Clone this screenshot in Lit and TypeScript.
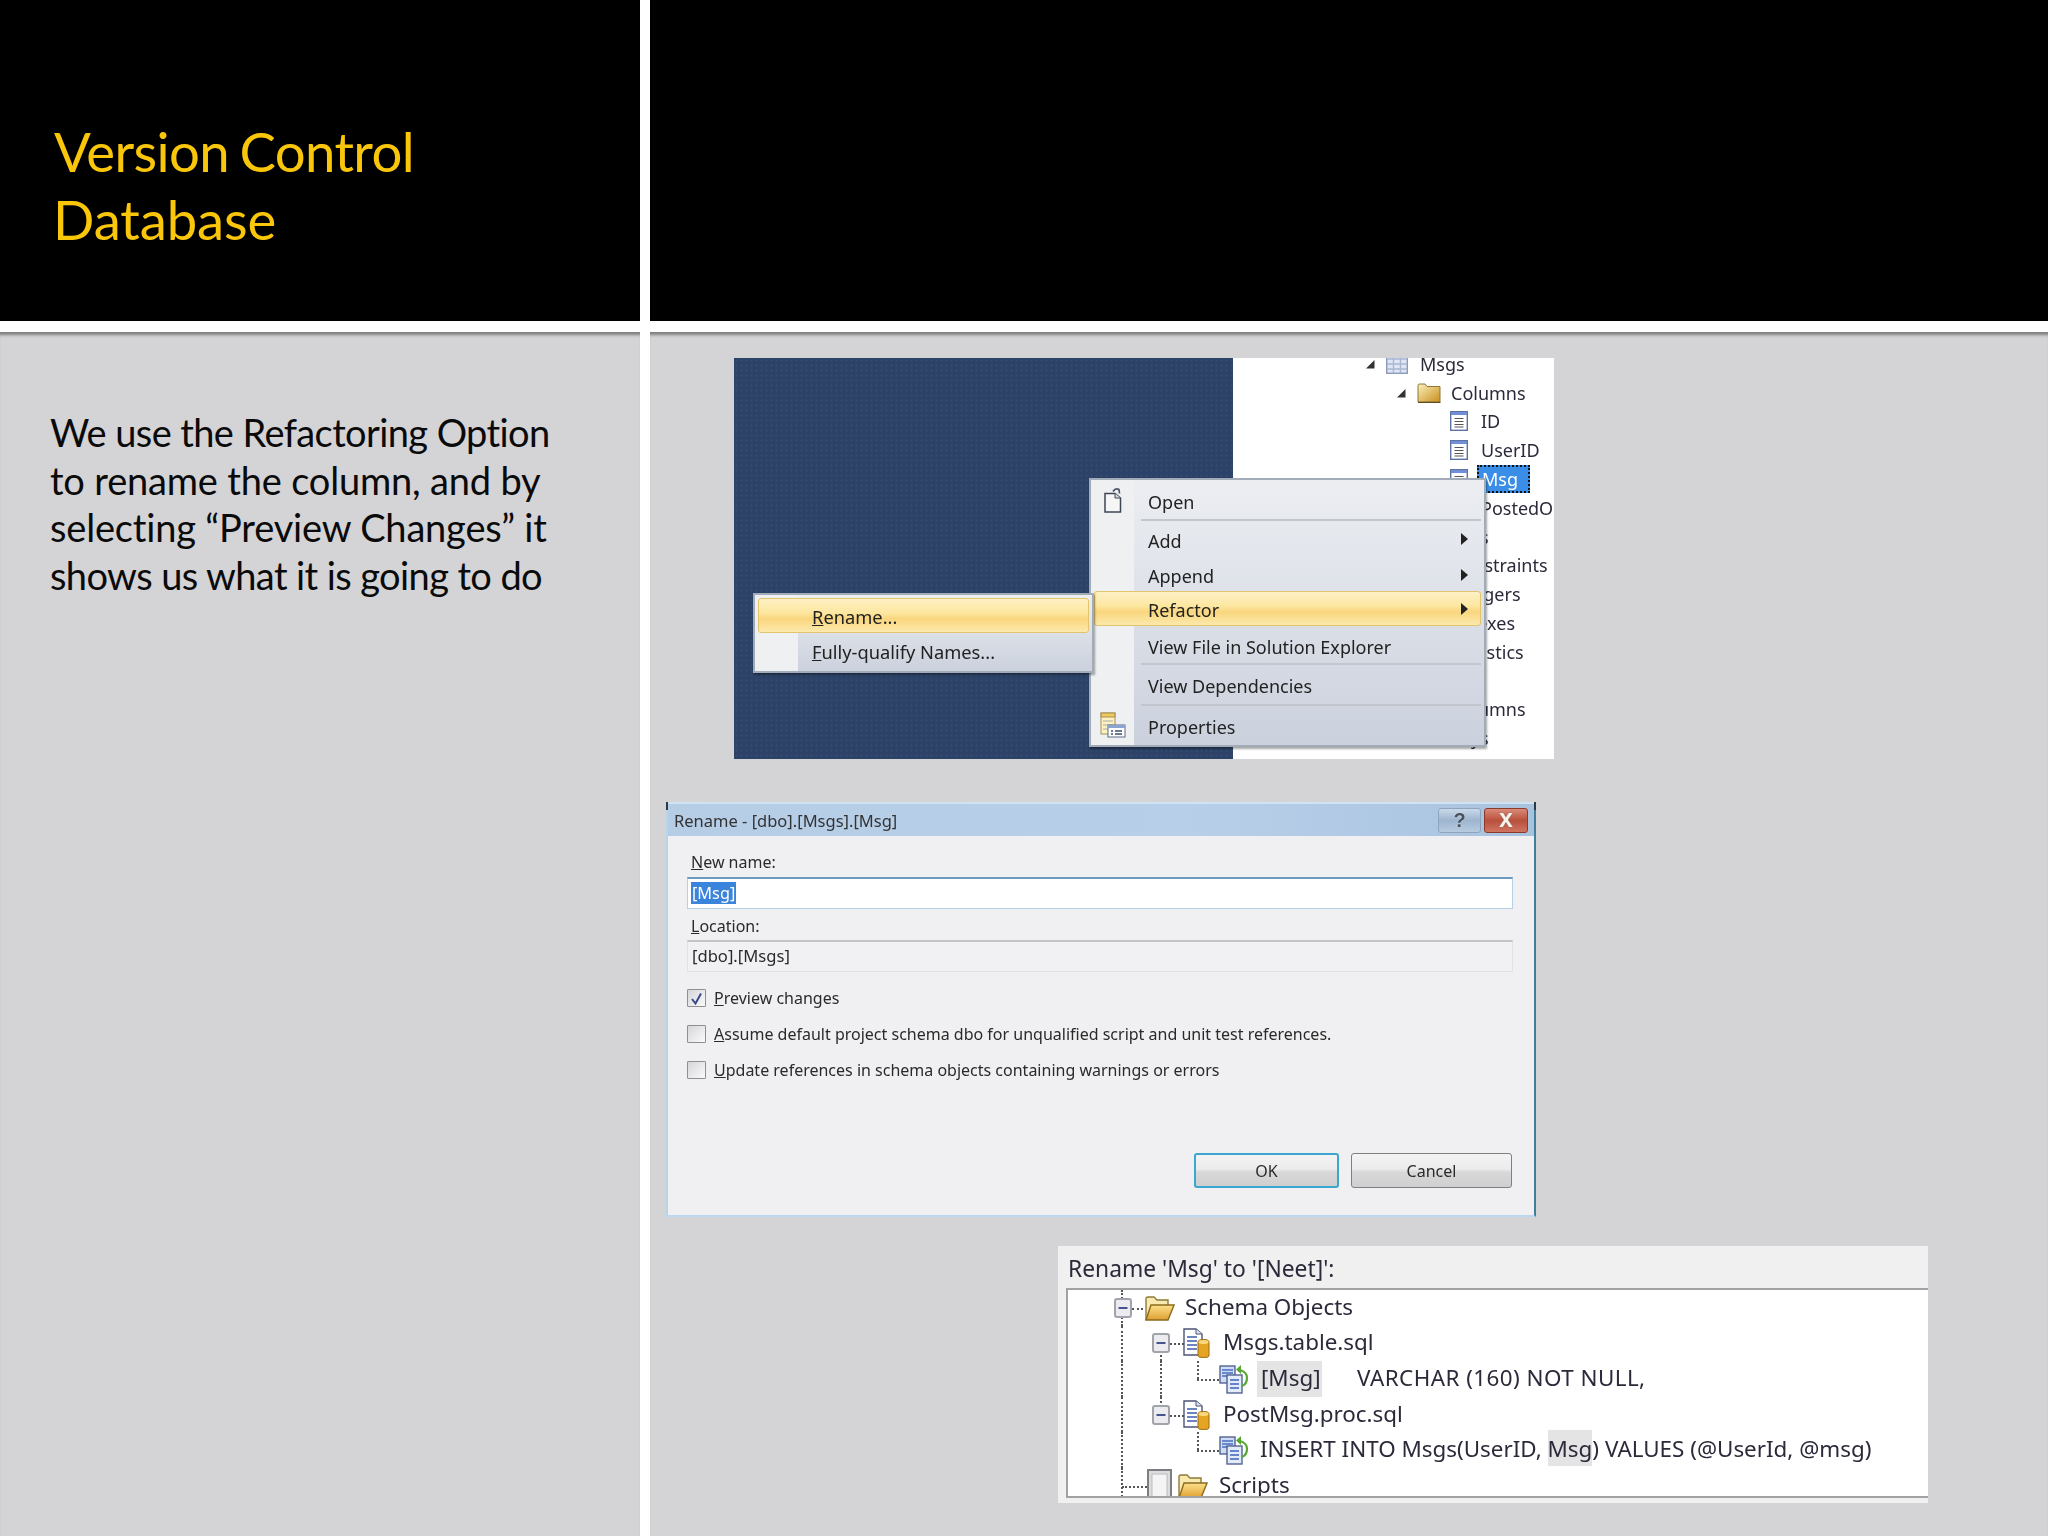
import { LitElement, html, css } from "lit";
import { customElement } from "lit/decorators.js";

const arrowDown = html`<svg class="ti" width="10" height="10" viewBox="0 0 10 10"><path d="M9.5 1V9.5H1Z" fill="#333"/></svg>`;
const tableIcon = html`<svg width="22" height="20" viewBox="0 0 22 20"><rect x=".7" y=".7" width="20.6" height="18.6" fill="#dfe6f4" stroke="#8b9ab8" stroke-width="1.4"/><path d="M1 5H21M1 10H21M1 15H21M7.500 1V19M14.500 1V19" stroke="#a9b6d4" stroke-width="1.400"/></svg>`;
const folderIcon = html`<svg width="24" height="20" viewBox="0 0 24 20"><defs><linearGradient id="fg" x1="0" y1="0" x2="1" y2="1"><stop offset="0" stop-color="#fbf0bd"/><stop offset="1" stop-color="#c98f1c"/></linearGradient></defs><path d="M1 2.500Q1 1 2.500 1H8L10 3.500H23V19H1Z" fill="url(#fg)" stroke="#8e7636" stroke-width="1"/><path d="M1 19.500H23.500" stroke="#5e4a1e" stroke-width="1.200"/></svg>`;
const columnIcon = html`<svg width="18" height="20" viewBox="0 0 18 20"><rect x=".7" y=".7" width="16.600" height="18.600" fill="#fff" stroke="#5d72a0" stroke-width="1.400"/><rect x="1" y="1" width="16" height="3" fill="#6f8fd6"/><path d="M4.500 7.500H13.500M4.500 10.500H13.500M4.500 13.500H13.500M4.500 16H13.500" stroke="#555" stroke-width="1.200"/></svg>`;
const openIcon = html`<svg width="18" height="26" viewBox="0 0 18 26"><path d="M1 6.500H11L16.500 11V25H1Z" fill="#f6f6f6" stroke="#3e4654" stroke-width="1.500"/><path d="M11 6.500V11H16.500" fill="#d8dbe2" stroke="#3e4654"/><path d="M9 4.500Q11.500 .5 15 2.500L15.500 6.500" fill="none" stroke="#4c5565" stroke-width="1.700"/></svg>`;
const propsIcon = html`<svg width="26" height="26" viewBox="0 0 26 26"><rect x="1" y="1" width="14" height="21" fill="#fdf1c0" stroke="#a2905b"/><rect x="1" y="1" width="14" height="4" fill="#f0c95c" stroke="#a2905b"/><path d="M3 9H13M3 13H13M3 17H9" stroke="#aaa"/><rect x="8" y="13" width="17" height="12" fill="#fff" stroke="#5d6a84"/><rect x="8" y="13" width="17" height="3" fill="#8aa3cf"/><path d="M11 19H13M15 19H22M11 22H13M15 22H22" stroke="#3c4e74" stroke-width="1.300"/></svg>`;
const expander = html`<svg width="18" height="20" viewBox="0 0 18 20"><rect x="1" y="1" width="16" height="18" rx="2" fill="#ececf0" stroke="#a2a4ac" stroke-width="2"/><path d="M4.500 10H13.500" stroke="#46558f" stroke-width="2"/></svg>`;
const openFolder = html`<svg width="32" height="26" viewBox="0 0 32 26"><defs><linearGradient id="of" x1="0" y1="0" x2="0" y2="1"><stop offset="0" stop-color="#fbe18c"/><stop offset="1" stop-color="#e0a030"/></linearGradient></defs><path d="M3 25V4Q3 2 5 2H11L14 5H25V10" fill="#f8e9ae" stroke="#8f7a3a" stroke-width="1.400"/><path d="M3 25L8 10H31L25 25Z" fill="url(#of)" stroke="#8c6a1c" stroke-width="1.400"/></svg>`;
const docDb = html`<svg width="27" height="30" viewBox="0 0 27 30"><path d="M1 1H13L19 6V27H1Z" fill="#fff" stroke="#4a5576" stroke-width="1.400"/><path d="M13 1V6H19" fill="#dfe3ec" stroke="#4a5576"/><path d="M4 9H14M4 13H14M4 17H14M4 21H14" stroke="#3e5ea8" stroke-width="1.600"/><path d="M15 14Q15 11.500 20.500 11.500T26 14V28Q26 29.500 20.500 29.500T15 28Z" fill="#e5a423" stroke="#9a6c12"/><ellipse cx="20.500" cy="14" rx="5" ry="2" fill="#f8d878"/></svg>`;
const renameIcon = html`<svg width="30" height="30" viewBox="0 0 30 30"><rect x="1" y="2" width="15" height="17" fill="#cfdcf6" stroke="#49598a" stroke-width="1.300"/><path d="M3 6H14M3 9H14M3 12H14" stroke="#4a6ec0" stroke-width="1.500"/><rect x="8" y="11" width="15" height="18" fill="#e3ebfb" stroke="#49598a" stroke-width="1.300"/><path d="M11 16H20M11 20H20M11 24H20" stroke="#3c63bb" stroke-width="1.700"/><path d="M21 6Q28 8 28 14T23 22" fill="none" stroke="#56a832" stroke-width="2.200"/><path d="M22 1V10L17 5.500Z" fill="#56a832"/></svg>`;
const smallCheck = html`<svg width="25" height="33" viewBox="0 0 25 33"><rect x="1" y="1" width="23" height="31" fill="#dcdcde" stroke="#7e7e82" stroke-width="2"/><rect x="5" y="5" width="15" height="23" fill="#f4f4f4" stroke="#bcbcc0"/></svg>`;
const submenuArrow = html`<svg class="sa" width="7" height="12" viewBox="0 0 7 12"><path d="M0 0L7 6L0 12Z" fill="#222"/></svg>`;

interface TreeRow { x: number; gap: number; arrow?: boolean; icon?: unknown; text: string; sel?: boolean }
const explorer: TreeRow[] = [
  { x: 132, gap: 12, arrow: true, icon: tableIcon, text: "Msgs" },
  { x: 163, gap: 10, arrow: true, icon: folderIcon, text: "Columns" },
  { x: 217, gap: 13, icon: columnIcon, text: "ID" },
  { x: 217, gap: 13, icon: columnIcon, text: "UserID" },
  { x: 217, gap: 9, icon: columnIcon, text: "Msg", sel: true },
  { x: 217, gap: 13, icon: columnIcon, text: "PostedOn" },
  { x: 217, gap: 0, text: "Keys" },
  { x: 218, gap: 0, text: "Constraints" },
  { x: 218, gap: 0, text: "Triggers" },
  { x: 216, gap: 0, text: "Indexes" },
  { x: 216, gap: 0, text: "Statistics" },
  { x: 218, gap: 0, text: "" },
  { x: 218, gap: 0, text: "Columns" },
  { x: 217, gap: 0, text: "Keys" },
];

interface MenuItem { h: number; label?: string; icon?: unknown; sub?: boolean; hot?: boolean; sep?: boolean }
const mainMenu: MenuItem[] = [
  { h: 38, label: "Open", icon: openIcon },
  { h: 2, sep: true },
  { h: 36, label: "Add", sub: true },
  { h: 35, label: "Append", sub: true },
  { h: 35, label: "Refactor", sub: true, hot: true },
  { h: 36, label: "View File in Solution Explorer" },
  { h: 2, sep: true },
  { h: 39, label: "View Dependencies" },
  { h: 2, sep: true },
  { h: 38, label: "Properties", icon: propsIcon },
];

@customElement("app-root")
export class AppRoot extends LitElement {
  static styles = css`
    :host { display: block; width: 2048px; height: 1536px; overflow: hidden; background: #fff; }
    .slide { display: grid; grid-template-columns: 640px 1fr; grid-template-rows: 321px 1fr; gap: 11px 10px; width: 2048px; height: 1536px; }
    .band { background: #000; }
    .title { padding: 118px 0 0 54px; margin: 0; font: 400 54.500px/67.700px "Lato", sans-serif; color: #fac60a; letter-spacing: -.6px; word-spacing: -3px; }
    .db { letter-spacing: -.1px; margin-left: -1px; }
    .pane { background: #d4d3d5; box-shadow: inset 0 5px 3px -2px rgba(60,60,60,.55); position: relative; }
    .left p { margin: 0; padding: 77px 0 0 50px; font: 400 38px/47.700px "Lato", sans-serif; color: #0a0a0a; letter-spacing: -.6px; }
    .left .loose { letter-spacing: -.18px; }
    .right { display: flex; flex-direction: column; align-items: flex-start; overflow: hidden; }

    .shot { font-family: "Noto Sans", sans-serif; color: #222; filter: blur(.35px); }
    /* context-menu capture */
    .ctx { margin: 26px 0 0 84px; width: 820px; height: 401px; display: flex; position: relative; overflow: hidden; background: #fff; }
    .navy { width: 499px; background-color: #2c4266; background-image: radial-gradient(#324a70 1px, transparent 1.200px); background-size: 5px 5px; }
    .explorer { flex: 1; margin-top: -8.500px; font-size: 18px; overflow: hidden; }
    .erow { height: 28.800px; display: flex; align-items: center; white-space: nowrap; color: #2a2a3a; }
    .ti { margin-right: 11px; flex: none; }
    .sel { background: #3a8ee8; color: #fff; outline: 2px dotted #111; outline-offset: -2px; padding: 0 12px 0 5px; height: 28px; line-height: 28px; }
    .menu { position: absolute; background: linear-gradient(#eceef2, #cbd1dd); border: 2px solid #a2abb8; box-sizing: border-box; font-size: 18px; color: #222; box-shadow: 1px 2px 2px rgba(0,0,0,.35); }
    .gutter { position: absolute; left: 0; top: 0; bottom: 0; background: #eef0f2; }
    .main { left: 355px; top: 120px; width: 397px; height: 269px; padding-top: 1px; }
    .main .gutter { width: 43px; }
    .sub { left: 19px; top: 235px; width: 341px; height: 80px; z-index: 2; padding-top: 3px; font-size: 18.300px; }
    .sub .gutter { width: 43px; }
    .item { position: relative; display: flex; align-items: center; box-sizing: border-box; }
    .main .item { padding: 3px 16px 0 57px; }
    .sub .item { padding: 2px 10px 0 57px; height: 35px; }
    .icon { position: absolute; left: 0; top: 0; bottom: 0; width: 43px; display: flex; justify-content: center; align-items: center; }
    .label { flex: 1; white-space: nowrap; }
    .sa { flex: none; margin-top: -3px; }
    .hot { background: linear-gradient(#fdf0c4, #fde7a0 42%, #f9d67e 60%, #fce9ac); border: 1px solid #e3c46c; border-radius: 3px; margin: 0 3px; }
    .main .hot { padding-left: 53px; padding-right: 12px; margin-top: -1px; margin-bottom: 1px; }
    .sub .hot { margin: 0 3px; padding-left: 53px; }
    .sep { margin-left: 50px; margin-right: 3px; background: #c2c6ce; position: relative; }

    /* rename dialog capture */
    .dialog { position: relative; margin: 43px 0 0 16px; width: 870px; height: 415px; box-sizing: border-box; background: #f0f0f2; display: flex; flex-direction: column; font-size: 16px; border-top: 2px solid #cfe3f3; border-left: 2px solid #b6d4ea; border-right: 2px solid #3f7f9c; border-bottom: 2px solid #bcd8ee; color: #2a2a2a; }
    .dialog::before, .dialog::after { content: ""; position: absolute; top: -2px; width: 2px; height: 8px; background: #2a3a48; }
    .dialog::before { left: -2px; }
    .dialog::after { right: -2px; }
    .titlebar { height: 32px; flex: none; display: flex; align-items: center; padding: 0 6px 0 6px; background: linear-gradient(90deg, #b6cde6, #b8cfe9 60%, #a9c3df); font-size: 16.500px; color: #333; }
    .titlebar .t { flex: 1; }
    .cap { height: 25px; border: 1px solid #8ea5bd; border-radius: 3px; display: flex; align-items: center; justify-content: center; font-weight: 700; font-family: "Liberation Sans", sans-serif; box-sizing: border-box; }
    .help { width: 43px; background: linear-gradient(#c9d9ea, #9db5cf 50%, #b7cbe0); color: #46505e; margin-right: 3px; font-size: 20px; text-shadow: 0 0 1px #fff; }
    .close { width: 44px; background: linear-gradient(#d98a78, #b9503c 50%, #cf7561); border-color: #8c3a2c; color: #f8f2ec; font-size: 25px; line-height: 20px; padding-bottom: 5px; text-shadow: 0 0 1px #555; }
    .dbody { flex: 1; display: flex; flex-direction: column; padding: 16px 21px 27px 19px; }
    .flabel { height: 20px; line-height: 20px; padding-left: 4px; }
    .field { height: 32px; box-sizing: border-box; border: 1px solid #b5cfe6; border-top: 2px solid #6d9bc0; background: #fff; display: flex; align-items: center; padding: 0 0 2px 3px; margin-top: 5px; font-size: 16.300px; }
    .field span { background: #3a84dc; color: #fff; padding: 0 1px; }
    .ro { background: #f1f1f3; border: 1px solid #e2e2e6; border-top: 2px solid #c4c4c8; margin-top: 4px; font-size: 16.600px; }
    .ro span { background: none; color: #2a2a2a; }
    .gap7 { margin-top: 7px; }
    .checks { display: flex; flex-direction: column; gap: 18px; margin-top: 17px; }
    .check { display: flex; align-items: center; gap: 8px; height: 18px; white-space: nowrap; }
    .box { display: flex; align-items: center; justify-content: center; width: 19px; height: 18px; box-sizing: border-box; border: 1.500px solid #8f8f92; border-radius: 1px; background: linear-gradient(135deg, #d6d6da, #fafafa); flex: none; }
    .btns { margin-top: auto; display: flex; justify-content: flex-end; gap: 12px; margin-right: 1px; }
    .btn { height: 35px; box-sizing: border-box; border: 1.500px solid #7f7f7f; border-radius: 3px; background: linear-gradient(#f3f3f3, #ececec 45%, #d8d8d8 55%, #cfcfcf); display: flex; align-items: center; justify-content: center; font-size: 16px; }
    .ok { width: 145px; border: 2px solid #3ba6d0; }
    .cancel { width: 161px; }

    /* preview capture */
    .preview { margin: 29px 0 0 408px; width: 870px; height: 257px; background: #f0f0f0; font-size: 22.400px; color: #2a2a3a; display: flex; flex-direction: column; }
    .phead { height: 42px; flex: none; display: flex; align-items: center; padding: 3px 0 0 10px; box-sizing: border-box; font-size: 22.800px; }
    .ptree { margin-left: 8px; height: 210px; box-sizing: border-box; background: #fff; border: 2px solid #a2a2a2; border-right: none; overflow: hidden; }
    .prow { position: relative; height: 35.600px; display: flex; align-items: center; white-space: pre; }
    .prow svg { flex: none; position: relative; z-index: 1; }
    .v { position: absolute; width: 0; border-left: 2px dotted #555; }
    .h { position: absolute; height: 0; top: 50%; border-top: 2px dotted #555; }
    .full { top: 0; bottom: 0; }
    .upper { top: 0; bottom: 50%; }
    .lower { top: 50%; bottom: 0; }
    .ex { display: flex; margin-right: 13px; }
    .ex0 { margin-right: 11px; }
    .txt { margin-bottom: 3px; }
    .mark { background: #e4e4e4; display: flex; align-items: center; box-sizing: border-box; height: 35.600px; width: 65px; padding: 0 0 3px 4px; margin-left: 8px; }
    .imark { background: #e4e4e4; padding: 3px 0 2px; }
    .wide { letter-spacing: .45px; margin-left: 35px; }
    .name { margin-left: 13px; }
    .name0 { margin-left: 10px; }
    .ins { margin-left: 11px; }
    .fld { display: flex; margin-left: 4px; }
    .scr { margin-left: 11px; }
  `;

  private menuItem(m: MenuItem) {
    if (m.sep) return html`<div class="sep" style="height:${m.h}px"></div>`;
    return html`<div class="item ${m.hot ? "hot" : ""}" style="height:${m.h}px">
      ${m.icon ? html`<span class="icon">${m.icon}</span>` : ""}
      <span class="label">${m.label}</span>
      ${m.sub ? submenuArrow : ""}
    </div>`;
  }

  private erow(r: TreeRow) {
    return html`<div class="erow" style="padding-left:${r.x}px">
      ${r.arrow ? arrowDown : ""}
      ${r.icon ? html`<span style="display:flex;margin-right:${r.gap}px">${r.icon}</span>` : ""}
      ${r.sel ? html`<span class="sel">${r.text}</span>` : html`<span>${r.text}</span>`}
    </div>`;
  }

  private line(cls: string, left: number, width?: number) {
    return html`<span class="${cls}" style="left:${left}px${width ? `;width:${width}px` : ""}"></span>`;
  }

  render() {
    return html`<div class="slide">
      <div class="band"><h1 class="title">Version Control<br /><span class="db">Database</span></h1></div>
      <div class="band"></div>
      <div class="pane left"><p>We use the Refactoring Option<br /><span class="loose">to rename the column, and by</span><br /><span class="loose">selecting “Preview Changes” it</span><br />shows us what it is going to do</p></div>
      <div class="pane right">
        <div class="shot ctx">
          <div class="navy"></div>
          <div class="explorer">${explorer.map((r) => this.erow(r))}</div>
          <div class="menu main">
            <div class="gutter"></div>
            ${mainMenu.map((m) => this.menuItem(m))}
          </div>
          <div class="menu sub">
            <div class="gutter"></div>
            <div class="item hot"><span class="label"><u>R</u>ename...</span></div>
            <div class="item"><span class="label"><u>F</u>ully-qualify Names...</span></div>
          </div>
        </div>

        <div class="shot dialog">
          <div class="titlebar">
            <span class="t">Rename - [dbo].[Msgs].[Msg]</span>
            <span class="cap help">?</span>
            <span class="cap close">x</span>
          </div>
          <div class="dbody">
            <div class="flabel"><u>N</u>ew name:</div>
            <div class="field"><span>[Msg]</span></div>
            <div class="flabel gap7"><u>L</u>ocation:</div>
            <div class="field ro"><span>[dbo].[Msgs]</span></div>
            <div class="checks">
              <div class="check"><span class="box"><svg width="13" height="13" viewBox="0 0 13 13"><path d="M2 7L5.500 11.500L11 1.500" fill="none" stroke="#3c4a8c" stroke-width="2"/></svg></span><span><u>P</u>review changes</span></div>
              <div class="check"><span class="box"></span><span><u>A</u>ssume default project schema dbo for unqualified script and unit test references.</span></div>
              <div class="check"><span class="box"></span><span><u>U</u>pdate references in schema objects containing warnings or errors</span></div>
            </div>
            <div class="btns">
              <div class="btn ok">OK</div>
              <div class="btn cancel">Cancel</div>
            </div>
          </div>
        </div>

        <div class="shot preview">
          <div class="phead">Rename 'Msg' to '[Neet]':</div>
          <div class="ptree">
            <div class="prow" style="padding-left:46px">
              ${this.line("v full", 53)}${this.line("h", 64, 11)}
              <span class="ex ex0">${expander}</span>${openFolder}<span class="txt name0">Schema Objects</span>
            </div>
            <div class="prow" style="padding-left:84px">
              ${this.line("v full", 53)}${this.line("v lower", 92)}${this.line("h", 102, 14)}
              <span class="ex">${expander}</span>${docDb}<span class="txt name">Msgs.table.sql</span>
            </div>
            <div class="prow" style="padding-left:151px">
              ${this.line("v full", 53)}${this.line("v full", 92)}${this.line("v upper", 129)}${this.line("h", 129, 22)}
              ${renameIcon}<span class="mark">[Msg]</span><span class="txt wide">VARCHAR (160) NOT NULL,</span>
            </div>
            <div class="prow" style="padding-left:84px">
              ${this.line("v full", 53)}${this.line("v upper", 92)}${this.line("h", 102, 14)}
              <span class="ex">${expander}</span>${docDb}<span class="txt name">PostMsg.proc.sql</span>
            </div>
            <div class="prow" style="padding-left:151px">
              ${this.line("v full", 53)}${this.line("v upper", 129)}${this.line("h", 129, 22)}
              ${renameIcon}<span class="txt ins">INSERT INTO Msgs(UserID, <span class="imark">Msg</span>) VALUES (@UserId, @msg)</span>
            </div>
            <div class="prow" style="padding-left:79px">
              ${this.line("v full", 53)}${this.line("h", 54, 25)}
              ${smallCheck}<span class="fld">${openFolder}</span><span class="txt scr">Scripts</span>
            </div>
          </div>
        </div>
      </div>
    </div>`;
  }
}
